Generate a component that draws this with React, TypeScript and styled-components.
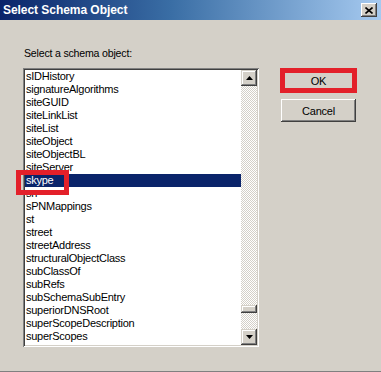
import React from "react";
import styled, { createGlobalStyle } from "styled-components";

const Global = createGlobalStyle`
  html, body { margin: 0; padding: 0; background: #d4d0c8; }
  * { box-sizing: border-box; }
  body { font-family: "Liberation Sans", Arial, sans-serif; }
`;

const Window = styled.div`
  width: 381px;
  height: 372px;
  background: #d4d0c8;
  border-bottom: 1px solid #808080;
  display: flex;
  flex-direction: column;
  overflow: hidden;
`;

const TitleBar = styled.div`
  height: 20px;
  flex: none;
  display: flex;
  align-items: center;
  justify-content: space-between;
  padding: 0 4px 0 3px;
  background: linear-gradient(to right, #0a246a 0%, #3a6ea5 45%, #a6caf0 100%);
`;

const Title = styled.span`
  color: #fff;
  font-weight: bold;
  font-size: 12px;
  line-height: 14px;
  letter-spacing: -0.05px;
`;

const CloseButton = styled.div`
  width: 16px;
  height: 14px;
  background: #d4d0c8;
  display: flex;
  align-items: center;
  justify-content: center;
  box-shadow: inset -1px -1px #404040, inset 1px 1px #fff, inset -2px -2px #808080,
    inset 2px 2px #d4d0c8;
`;

const Body = styled.div`
  display: flex;
  align-items: flex-start;
  gap: 22px;
  padding: 27px 0 0 23px;
`;

const LeftColumn = styled.div`
  display: flex;
  flex-direction: column;
`;

const Label = styled.div`
  font-size: 10.6px;
  line-height: 13px;
  letter-spacing: -0.2px;
  color: #000;
  margin: 0 0 8px 1px;
`;

const ListBox = styled.div`
  position: relative;
  width: 236px;
  height: 279px;
  padding: 2px;
  background: #fff;
  display: flex;
  box-shadow: inset 1px 1px #808080, inset -1px -1px #fff, inset 2px 2px #404040,
    inset -2px -2px #d4d0c8;
`;

const Items = styled.div`
  flex: 1;
  overflow: hidden;
`;

const Row = styled.div<{ $selected?: boolean }>`
  height: 13px;
  line-height: 13px;
  font-size: 11px;
  letter-spacing: -0.25px;
  padding-left: 1px;
  white-space: nowrap;
  color: ${(p) => (p.$selected ? "#fff" : "#000")};
  background: ${(p) => (p.$selected ? "#0a246a" : "transparent")};
`;

const Scrollbar = styled.div`
  width: 16px;
  display: flex;
  flex-direction: column;
`;

const ScrollButton = styled.div`
  width: 16px;
  height: 16px;
  flex: none;
  background: #d4d0c8;
  display: flex;
  align-items: center;
  justify-content: center;
  box-shadow: inset -1px -1px #404040, inset 1px 1px #d4d0c8, inset -2px -2px #808080,
    inset 2px 2px #fff;
`;

const Track = styled.div`
  flex: 1;
  position: relative;
  background: repeating-conic-gradient(#d4d0c8 0 25%, #fff 0 50%) 0 0 / 2px 2px;
`;

const Thumb = styled.div`
  position: absolute;
  left: 0;
  width: 16px;
  height: 8px;
  background: #d4d0c8;
  box-shadow: inset -1px -1px #404040, inset 1px 1px #d4d0c8, inset -2px -2px #808080,
    inset 2px 2px #fff;
`;

const Highlight = styled.div`
  position: absolute;
  border: 5px solid #e3202a;
  pointer-events: none;
`;

const ListMark = styled(Highlight)`
  left: -7px;
  top: 102px;
  width: 53px;
  height: 25px;
`;

const ButtonColumn = styled.div`
  display: flex;
  flex-direction: column;
  gap: 7px;
  margin-top: 22px;
`;

const ButtonWrap = styled.div`
  position: relative;
`;

const ButtonMark = styled(Highlight)`
  left: -1px;
  top: -1px;
  width: 77px;
  height: 25px;
`;

const Button = styled.div<{ $default?: boolean }>`
  width: 75px;
  height: 23px;
  display: flex;
  align-items: center;
  justify-content: center;
  font-size: 11px;
  letter-spacing: -0.2px;
  color: #000;
  background: #d4d0c8;
  box-shadow: ${(p) =>
    p.$default
      ? "inset 0 0 0 1px #000, inset -2px -2px #404040, inset 2px 2px #fff, inset -3px -3px #808080"
      : "inset -1px -1px #404040, inset 1px 1px #fff, inset -2px -2px #808080, inset 2px 2px #d4d0c8"};
`;

const items = [
  "sIDHistory",
  "signatureAlgorithms",
  "siteGUID",
  "siteLinkList",
  "siteList",
  "siteObject",
  "siteObjectBL",
  "siteServer",
  "skype",
  "sn",
  "sPNMappings",
  "st",
  "street",
  "streetAddress",
  "structuralObjectClass",
  "subClassOf",
  "subRefs",
  "subSchemaSubEntry",
  "superiorDNSRoot",
  "superScopeDescription",
  "superScopes",
  "supplementalCredentials",
];

const scrollFraction = 0.93;

export default function App() {
  return (
    <>
      <Global />
      <Window>
        <TitleBar>
          <Title>Select Schema Object</Title>
          <CloseButton>
            <svg width="8" height="7" viewBox="0 0 8 7">
              <path d="M0.5 0.5 L7.5 6.5 M7.5 0.5 L0.5 6.5" stroke="#000" strokeWidth="1.6" />
            </svg>
          </CloseButton>
        </TitleBar>
        <Body>
          <LeftColumn>
            <Label>Select a schema object:</Label>
            <ListBox>
              <Items>
                {items.map((it) => (
                  <Row key={it} $selected={it === "skype"}>
                    {it}
                  </Row>
                ))}
              </Items>
              <Scrollbar>
                <ScrollButton>
                  <svg width="7" height="4" viewBox="0 0 7 4">
                    <path d="M3.5 0 L7 4 L0 4 Z" fill="#000" />
                  </svg>
                </ScrollButton>
                <Track>
                  <Thumb style={{ top: `calc(${scrollFraction * 100}% - ${scrollFraction * 8}px)` }} />
                </Track>
                <ScrollButton>
                  <svg width="7" height="4" viewBox="0 0 7 4">
                    <path d="M0 0 L7 0 L3.5 4 Z" fill="#000" />
                  </svg>
                </ScrollButton>
              </Scrollbar>
              <ListMark />
            </ListBox>
          </LeftColumn>
          <ButtonColumn>
            <ButtonWrap>
              <Button $default>OK</Button>
              <ButtonMark />
            </ButtonWrap>
            <Button>Cancel</Button>
          </ButtonColumn>
        </Body>
      </Window>
    </>
  );
}
